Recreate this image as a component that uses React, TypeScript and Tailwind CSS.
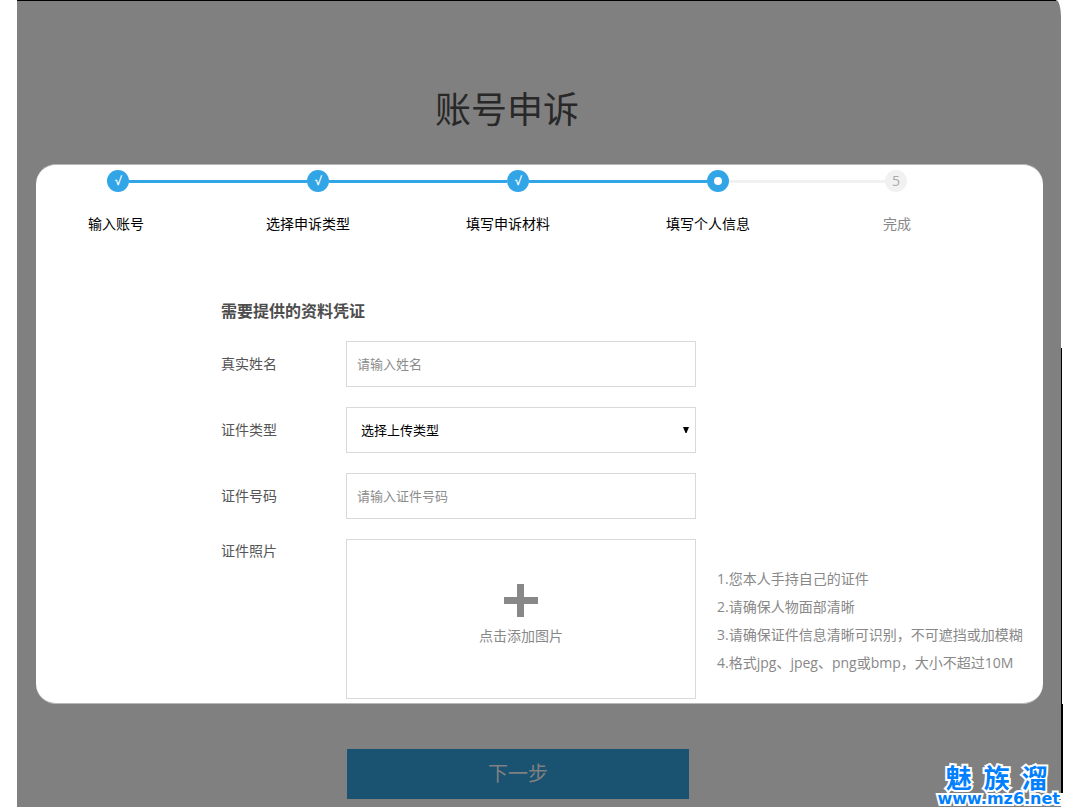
import { useState } from "react";

type StepState = "done" | "current" | "todo";

const steps: { label: string; state: StepState }[] = [
  { label: "输入账号", state: "done" },
  { label: "选择申诉类型", state: "done" },
  { label: "填写申诉材料", state: "done" },
  { label: "填写个人信息", state: "current" },
  { label: "完成", state: "todo" },
];

const tips = [
  "1.您本人手持自己的证件",
  "2.请确保人物面部清晰",
  "3.请确保证件信息清晰可识别，不可遮挡或加模糊",
  "4.格式jpg、jpeg、png或bmp，大小不超过10M",
];

function StepDot({ state, index }: { state: StepState; index: number }) {
  if (state === "todo") {
    return (
      <span className="flex size-[22px] shrink-0 items-center justify-center rounded-full bg-[#f1f1f1] text-sm text-[#aaa]">
        {index + 1}
      </span>
    );
  }
  return (
    <span className="flex size-[22px] shrink-0 items-center justify-center rounded-full bg-[#32a5e7] text-xs font-semibold text-white">
      {state === "done" ? "√" : <span className="size-2 rounded-full bg-white" />}
    </span>
  );
}

function Steps() {
  return (
    <div className="ml-[52px] max-w-[824px]">
      <div className="ml-[19px] mr-[5px] flex items-center">
        {steps.map((step, i) => (
          <div
            key={step.label}
            className={
              i < 3 ? "flex basis-[200px] items-center" : i === 3 ? "flex basis-[178px] items-center" : "flex items-center"
            }
          >
            <StepDot state={step.state} index={i} />
            {i < steps.length - 1 && (
              <span className={`h-[3px] flex-1 ${step.state === "done" ? "bg-[#32a5e7]" : "bg-[#f1f1f1]"}`} />
            )}
          </div>
        ))}
      </div>
      <ol className="mt-[22px] grid grid-cols-[178fr_200fr_200fr_217fr_29fr] text-sm leading-5">
        {steps.map((step) => (
          <li
            key={step.label}
            className={`whitespace-nowrap ${step.state === "todo" ? "text-[#888]" : "text-black"}`}
          >
            {step.label}
          </li>
        ))}
      </ol>
    </div>
  );
}

export default function App() {
  const [name, setName] = useState("");
  const [idType, setIdType] = useState("");
  const [idNumber, setIdNumber] = useState("");

  return (
    <div className="relative flex min-h-screen overflow-hidden bg-white pl-[17px] font-['Open_Sans','Noto_Sans_CJK_SC',sans-serif]">
      <main className="flex-1 bg-[#808080] pb-2 [border-top-right-radius:5px_17px]">
        <div className="mr-[5px] h-px bg-black" />
        <h1 className="pr-16 pt-[85px] text-center text-4xl leading-[48px] text-[#282828]">账号申诉</h1>

        <form id="appeal-form" onSubmit={(e) => e.preventDefault()}>
          <section className="ml-[19px] mr-[18px] mt-[30px] rounded-[20px] border-y border-[#b8b8b8] bg-white pb-1 pt-[5px]">
            <Steps />

            <div className="ml-[185px] mt-[65px] text-sm text-[#555]">
              <h2 className="text-base font-bold leading-6 text-[#4d4d4d]">需要提供的资料凭证</h2>

              <div className="mt-[18px] flex flex-col gap-5">
                <div className="flex items-center">
                  <label htmlFor="name" className="w-[125px]">真实姓名</label>
                  <input
                    id="name"
                    type="text"
                    value={name}
                    onChange={(e) => setName(e.target.value)}
                    placeholder="请输入姓名"
                    className="h-[46px] w-[350px] border border-[#d9d9d9] px-2.5 text-[13px] placeholder:text-[#8c8c8c]"
                  />
                </div>

                <div className="flex items-center">
                  <label htmlFor="id-type" className="w-[125px]">证件类型</label>
                  <div className="relative">
                    <select
                      id="id-type"
                      value={idType}
                      onChange={(e) => setIdType(e.target.value)}
                      className="block h-[46px] w-[350px] appearance-none border border-[#d9d9d9] bg-white px-3.5 text-[13px] text-black"
                    >
                      <option value="">选择上传类型</option>
                      <option value="id-card">身份证</option>
                      <option value="passport">护照</option>
                    </select>
                    <svg
                      viewBox="0 0 6 6"
                      className="pointer-events-none absolute right-[7px] top-5 size-1.5"
                      aria-hidden="true"
                    >
                      <path d="M0 0h6L3.5 6h-1z" fill="#000" />
                    </svg>
                  </div>
                </div>

                <div className="flex items-center">
                  <label htmlFor="id-number" className="w-[125px]">证件号码</label>
                  <input
                    id="id-number"
                    type="text"
                    value={idNumber}
                    onChange={(e) => setIdNumber(e.target.value)}
                    placeholder="请输入证件号码"
                    className="h-[46px] w-[350px] border border-[#d9d9d9] px-2.5 text-[13px] placeholder:text-[#8c8c8c]"
                  />
                </div>

                <div className="flex items-start">
                  <label htmlFor="id-photo" className="w-[125px] leading-6">证件照片</label>
                  <label
                    htmlFor="id-photo"
                    className="flex h-[160px] w-[350px] cursor-pointer flex-col items-center border border-[#d9d9d9] pt-11 text-[#888]"
                  >
                    <svg viewBox="0 0 34 34" className="size-[34px]" aria-hidden="true">
                      <path d="M13 0h7v13h14v7H20v13h-7V20H0v-7h13z" fill="#888" />
                    </svg>
                    <span className="mt-2 leading-5">点击添加图片</span>
                    <input id="id-photo" type="file" accept=".jpg,.jpeg,.png,.bmp" className="sr-only" />
                  </label>
                  <ul className="ml-[21px] mt-[26px] whitespace-nowrap leading-7 text-[#888]">
                    {tips.map((tip) => (
                      <li key={tip}>{tip}</li>
                    ))}
                  </ul>
                </div>
              </div>
            </div>
          </section>

          <button
            type="submit"
            className="ml-[330px] mt-[45px] block h-[50px] w-[342px] bg-[#1a5272] text-xl text-[#808080]"
          >
            下一步
          </button>
        </form>
      </main>

      {/* right edge of the page frame */}
      <div className="flex w-[19px] flex-col pb-3.5" aria-hidden="true">
        <div className="h-[348px]" />
        <div className="h-[356px] border-l border-black" />
        <div className="flex-1 border-l-2 border-black" />
      </div>

      <div className="absolute bottom-0 right-5 flex flex-col items-center text-[#007fff] [-webkit-text-stroke:4px_white] [paint-order:stroke_fill]">
        <div className="flex gap-3 pr-1 font-['Noto_Sans_CJK_SC',sans-serif] text-[26px] font-bold leading-7">
          <span>魅</span>
          <span>族</span>
          <span>溜</span>
        </div>
        <a href="#appeal-form" className="font-['DejaVu_Sans',sans-serif] text-base font-bold leading-4">www.mz6.net</a>
      </div>
    </div>
  );
}
